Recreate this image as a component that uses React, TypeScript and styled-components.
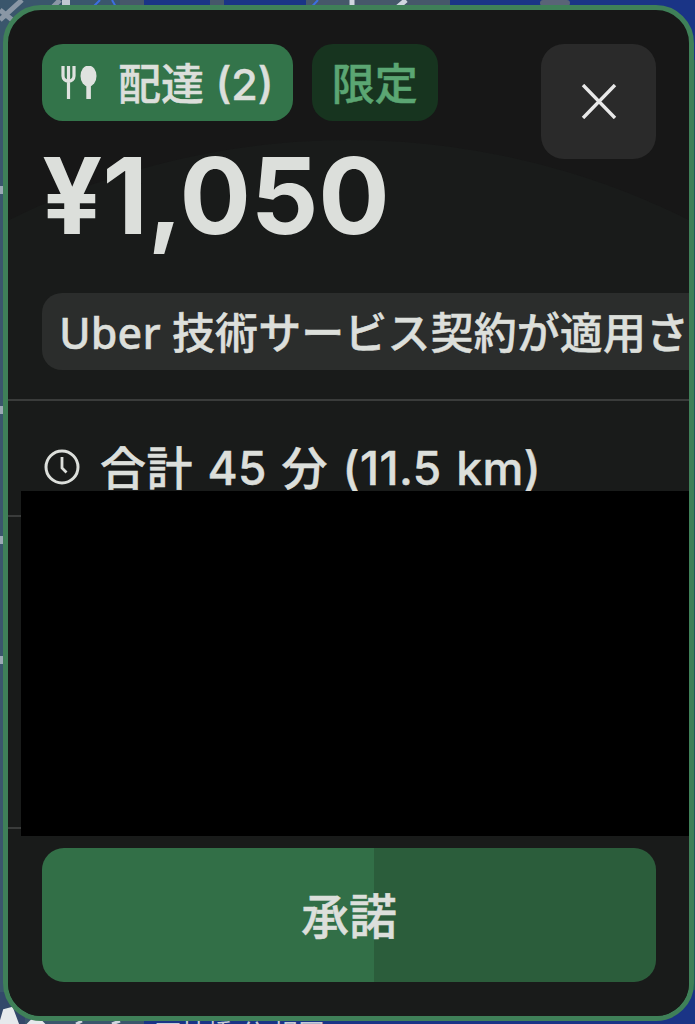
import React from 'react';
import styled, { createGlobalStyle } from 'styled-components';

const BODY_FONT = '"Noto Sans", "Noto Sans CJK JP", sans-serif';
const DIGIT_FONT = 'Inter, "Noto Sans CJK JP", sans-serif';
const TEXT = '#dcdfdb';

const GlobalStyle = createGlobalStyle`
  html, body {
    margin: 0;
    padding: 0;
    background: #1a3486;
  }
`;

const Page = styled.div`
  position: relative;
  box-sizing: border-box;
  width: 695px;
  height: 1024px;
  padding: 5px 1px 3px 3px;
  overflow: hidden;
  font-family: ${BODY_FONT};
`;

const MapBackdrop = styled.svg`
  position: absolute;
  inset: 0;
`;

const MapLabel = styled.span`
  position: absolute;
  left: 155px;
  top: 1017px;
  color: #c5cbd6;
  font-size: 26px;
  line-height: 32px;
  white-space: nowrap;
`;

const Card = styled.div`
  position: relative;
  box-sizing: border-box;
  display: flex;
  flex-direction: column;
  height: 100%;
  border: 5px solid #3f8058;
  border-radius: 38px;
  background: #171717;
  overflow: hidden;
`;

const SheetCurve = styled.div`
  position: absolute;
  top: 130px;
  left: 50%;
  width: 1524px;
  height: 1524px;
  margin-left: -762px;
  border-radius: 50%;
  background: #191b1a;
`;

const Summary = styled.div`
  position: relative;
  display: flex;
  justify-content: space-between;
  padding: 34px 33px 0 34px;
`;

const SummaryMain = styled.div`
  display: flex;
  flex-direction: column;
`;

const Badges = styled.div`
  display: flex;
  gap: 19px;
`;

const Badge = styled.div<{ $muted?: boolean }>`
  display: flex;
  align-items: center;
  gap: 21px;
  box-sizing: border-box;
  height: 77px;
  padding: 0 ${p => (p.$muted ? 20 : 19)}px;
  border-radius: 21px;
  background: ${p => (p.$muted ? '#17341f' : '#33744a')};
  color: ${p => (p.$muted ? '#5ba673' : TEXT)};
  font-family: ${DIGIT_FONT};
  font-size: 43px;
  font-weight: 500;
  -webkit-text-stroke: 0.5px currentColor;
  white-space: nowrap;

  span {
    padding-bottom: 4px;
  }
`;

const Price = styled.div`
  margin-top: 14px;
  color: ${TEXT};
  font-family: Inter, sans-serif;
  font-size: 106px;
  font-weight: 700;
  line-height: 122px;
  letter-spacing: -0.3px;
`;

const CloseButton = styled.button`
  display: flex;
  align-items: center;
  justify-content: center;
  width: 115px;
  height: 115px;
  padding: 0;
  border: 0;
  border-radius: 23px;
  background: #2a2a2a;
`;

const Notice = styled.div`
  position: relative;
  display: flex;
  align-items: center;
  box-sizing: border-box;
  width: 900px;
  height: 77px;
  margin: 36px 0 0 34px;
  padding: 0 0 3px 17px;
  border-radius: 20px;
  background: #2b2d2c;
  color: ${TEXT};
  font-size: 43px;
  font-weight: 500;
  -webkit-text-stroke: 0.5px currentColor;
  letter-spacing: 0.1px;
  white-space: nowrap;
`;

const Divider = styled.div`
  position: relative;
  height: 2px;
  margin-top: 29px;
  background: #3a3c3b;
`;

const TimeRow = styled.div`
  position: relative;
  display: flex;
  align-items: center;
  gap: 20px;
  height: 60px;
  margin: 36px 0 0 36px;
  color: ${TEXT};
  font-family: ${DIGIT_FONT};
  font-size: 46px;
  font-weight: 500;
  -webkit-text-stroke: 0.5px currentColor;
  letter-spacing: 0.4px;
  word-spacing: 2px;
  white-space: nowrap;

  span {
    padding-bottom: 4px;
  }
`;

const TripDetails = styled.div`
  position: relative;
  display: flex;
  height: 345px;
  margin-top: -6px;
`;

const DetailsRail = styled.div`
  display: flex;
  flex-direction: column;
  justify-content: space-between;
  box-sizing: border-box;
  width: 13px;
  padding: 24px 0 7px;
`;

const RailLine = styled.div`
  height: 2px;
  background: #3a3c3b;
`;

const Redaction = styled.div`
  flex: 1;
  background: #000;
`;

const AcceptButton = styled.button<{ $progress: number }>`
  position: relative;
  display: block;
  flex-shrink: 0;
  height: 134px;
  margin: 12px 33px 0 34px;
  padding: 0 0 5px;
  border: 0;
  border-radius: 22px;
  background: linear-gradient(
    to right,
    #326f47 ${p => p.$progress}%,
    #2b5d3b ${p => p.$progress}%
  );
  color: ${TEXT};
  font-family: ${BODY_FONT};
  font-size: 48px;
  font-weight: 500;
  -webkit-text-stroke: 0.5px currentColor;
`;

const UtensilsIcon = () => (
  <svg width="36" height="33" viewBox="0 0 36 33" fill="none">
    <path
      d="M2 0v10a5 5 0 0 0 5.500 5 5 5 0 0 0 5.500-5V0M7.500 0v33"
      stroke="#dfe2df"
      strokeWidth="3.2"
    />
    <ellipse cx="27.500" cy="10" rx="8" ry="10.500" fill="#dfe2df" />
    <rect x="25.300" y="14" width="4.600" height="19" fill="#dfe2df" />
  </svg>
);

const CloseIcon = () => (
  <svg width="36" height="35" viewBox="0 0 36 35" fill="none">
    <path d="M2 1l32 33M34 1L2 34" stroke="#e8e8e8" strokeWidth="3.4" />
  </svg>
);

const ClockIcon = () => (
  <svg width="36" height="36" viewBox="0 0 36 36" fill="none">
    <circle cx="18" cy="18" r="16" stroke={TEXT} strokeWidth="3" />
    <path d="M18 8v11l4.500 4.500" stroke={TEXT} strokeWidth="2.800" />
  </svg>
);

const MapDrawing = () => (
  <MapBackdrop width="695" height="1024" viewBox="0 0 695 1024">
    <rect width="695" height="1024" fill="#1a3486" />
    <rect x="0" y="0" width="144" height="1024" fill="#3a566c" />
    <rect x="144" y="20" width="551" height="990" fill="#1a3486" />
    <rect x="306" y="0" width="144" height="12" fill="#46586a" />
    <rect x="120" y="0" width="24" height="12" fill="#46586a" />
    <rect x="540" y="0" width="30" height="6" rx="3" fill="#5a6477" />
    <rect x="210" y="0" width="14" height="8" fill="#46586a" />
    <rect x="690" y="60" width="5" height="930" fill="#1c5a5a" />
    <path d="M0 10L22 28M22 0L0 20M60 0L40 20" stroke="#8a97a5" strokeWidth="5" />
    <path d="M88 12L100 0M120 14L112 0M305 14L318 0" stroke="#3c6fe0" strokeWidth="2" />
    <path d="M352 0v8M392 12L406 0" stroke="#d0d6df" strokeWidth="5" />
    <path d="M66 0v10" stroke="#c0c8d2" strokeWidth="8" />
    <path d="M0 190h3M0 410h3M0 540h3M0 660h3" stroke="#9ba8b5" strokeWidth="8" />
    <rect x="0" y="992" width="25" height="32" fill="#33486a" />
    <path d="M0 1024l4-14 8-2 6 16zM28 1024l8-8 8 8zM12 1005l4-6" fill="#e6e9ec" stroke="#e6e9ec" strokeWidth="2" />
    <path d="M76 1024l6-3M112 1024l8-3" stroke="#d0d6df" strokeWidth="3" />
  </MapBackdrop>
);

const App = () => {
  return (
    <Page>
      <GlobalStyle />
      <MapDrawing />
      <MapLabel>天神橋 公 根園</MapLabel>
      <Card>
        <SheetCurve />
        <Summary>
          <SummaryMain>
            <Badges>
              <Badge>
                <UtensilsIcon />
                <span>配達 (2)</span>
              </Badge>
              <Badge $muted>
                <span>限定</span>
              </Badge>
            </Badges>
            <Price>¥1,050</Price>
          </SummaryMain>
          <CloseButton aria-label="閉じる">
            <CloseIcon />
          </CloseButton>
        </Summary>
        <Notice>Uber 技術サービス契約が適用されます</Notice>
        <Divider />
        <TimeRow>
          <ClockIcon />
          <span>合計 45 分 (11.5 km)</span>
        </TimeRow>
        <TripDetails>
          <DetailsRail>
            <RailLine />
            <RailLine />
          </DetailsRail>
          <Redaction />
        </TripDetails>
        <AcceptButton $progress={54}>承諾</AcceptButton>
      </Card>
    </Page>
  );
};

export default App;
